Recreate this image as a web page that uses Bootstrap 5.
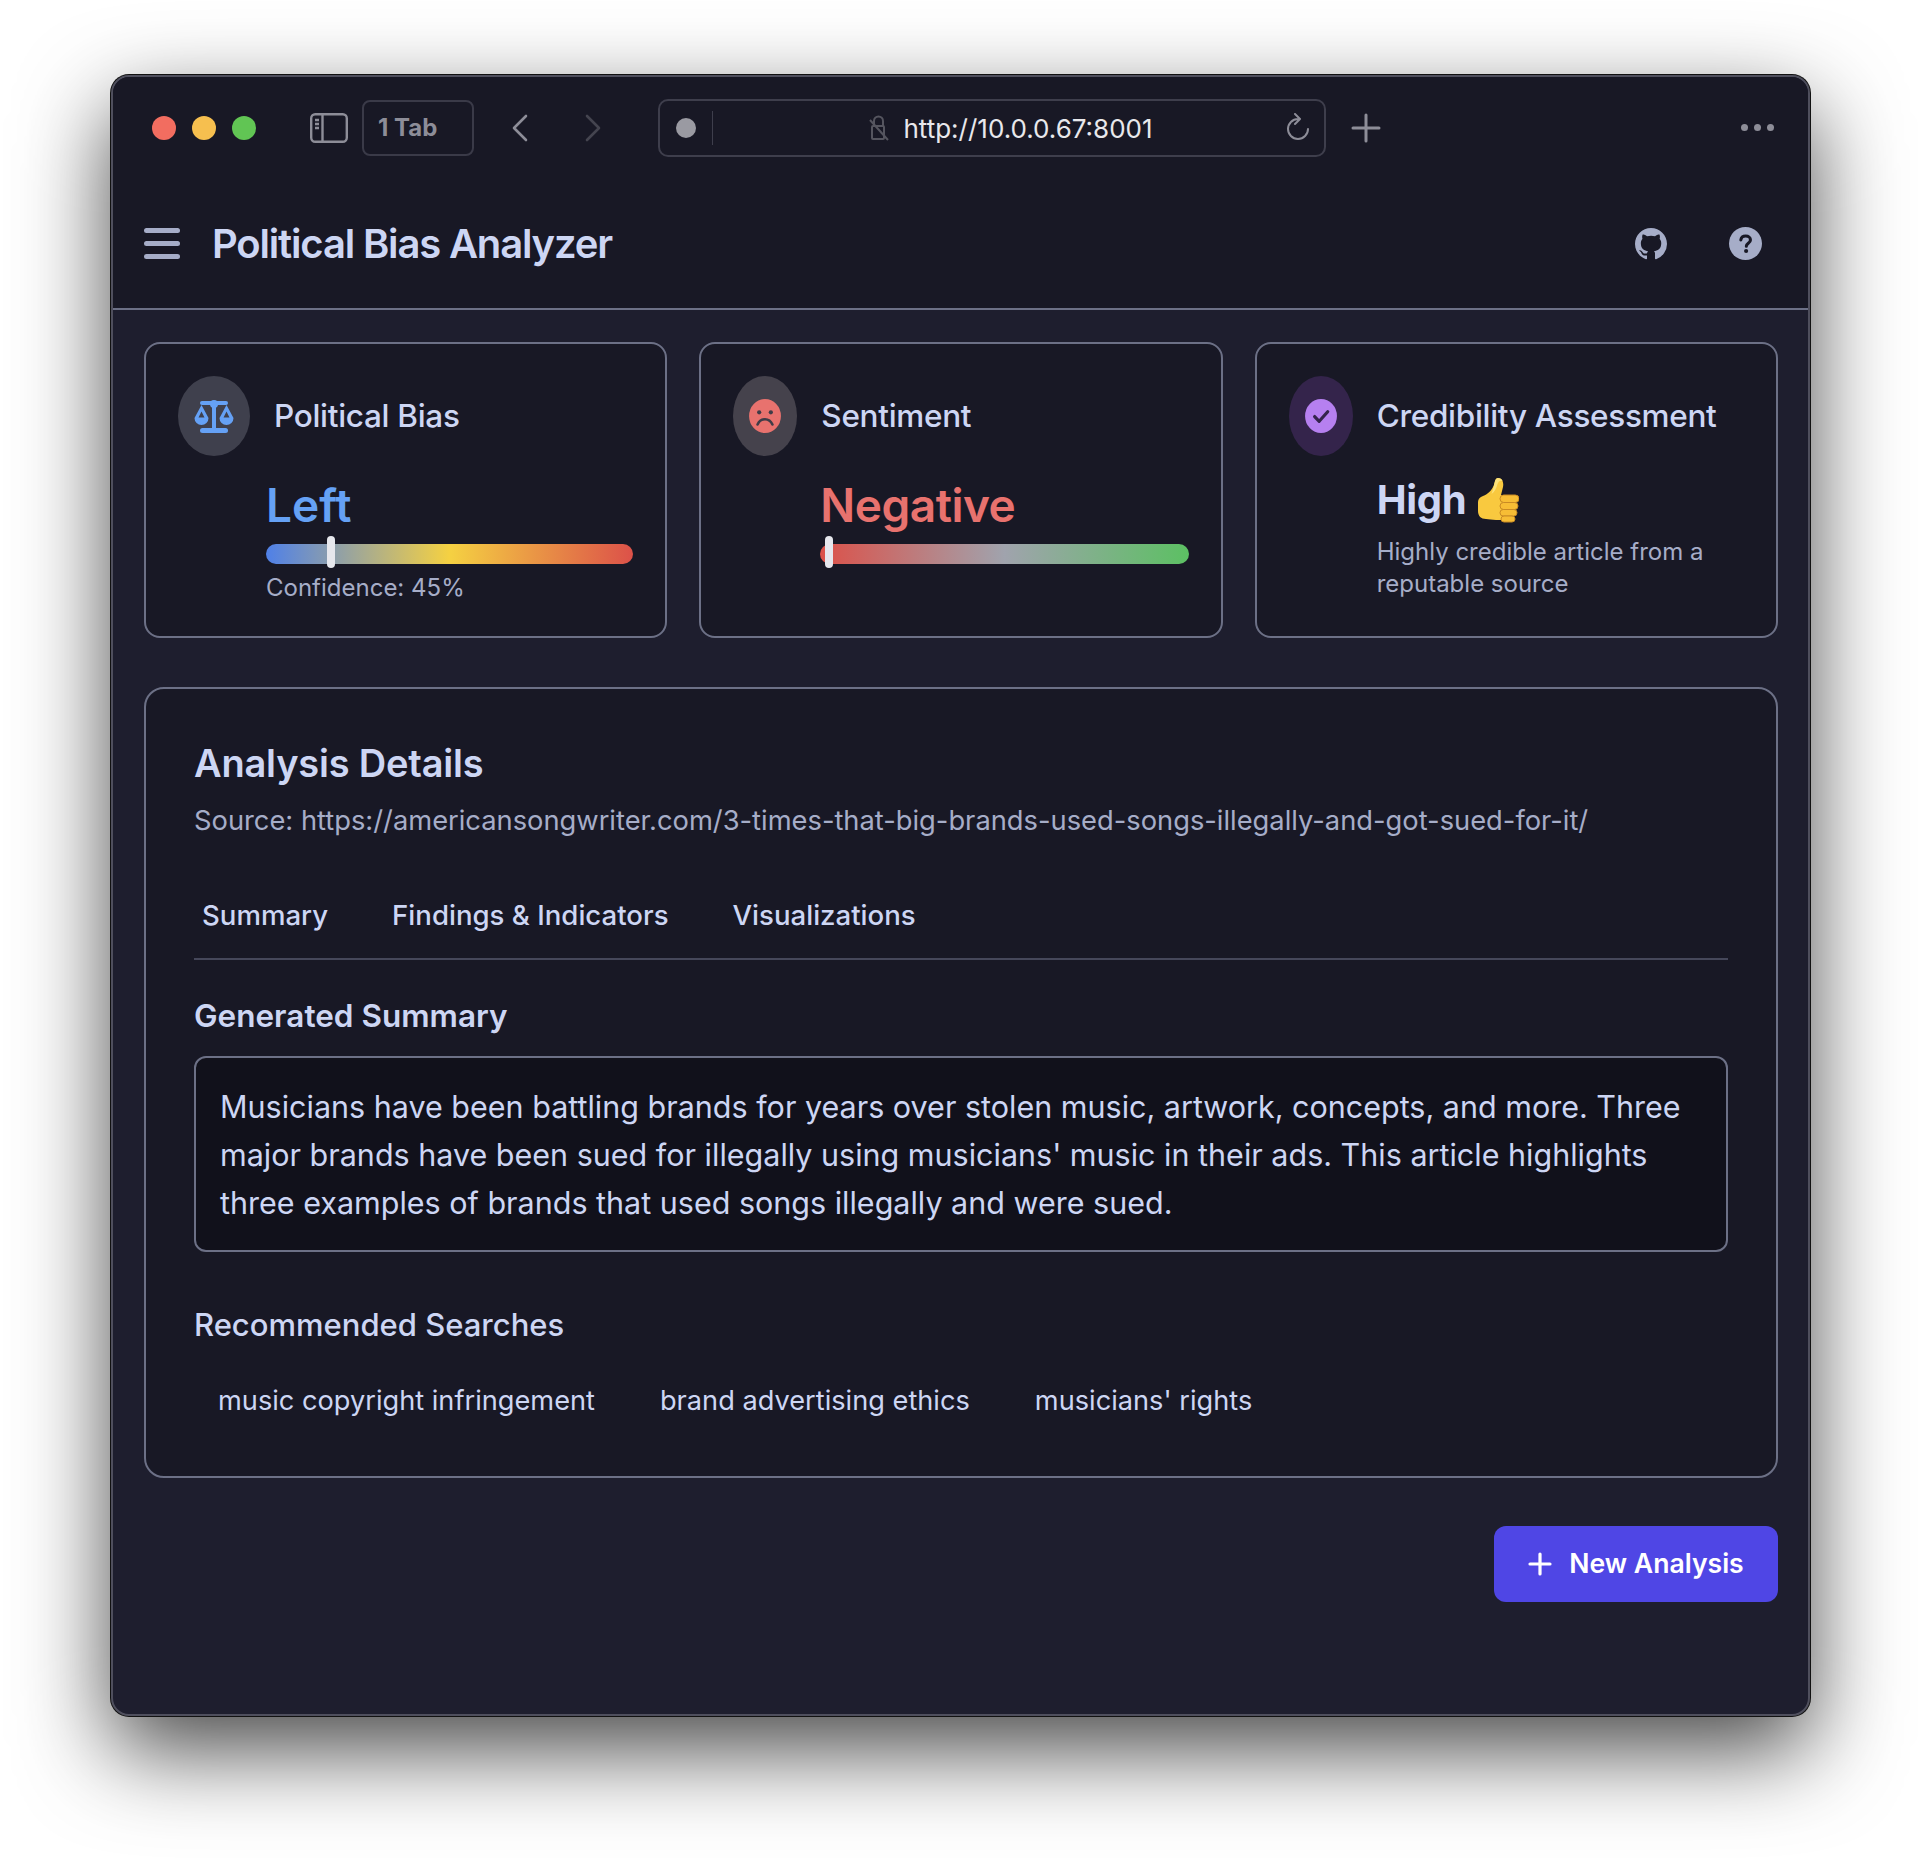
<!DOCTYPE html>
<html lang="en">
<head>
    <title>Political Bias Analyzer</title>
    <meta charset="utf-8">
    <meta name="viewport" content="width=device-width, initial-scale=1">
    <link href="https://cdn.jsdelivr.net/npm/bootstrap@5.3.3/dist/css/bootstrap.min.css" rel="stylesheet">
    <script src="https://cdn.jsdelivr.net/npm/bootstrap@5.3.3/dist/js/bootstrap.bundle.min.js"></script>
    <style>
        body { background: #fff; font-family: Inter, "Noto Sans", sans-serif; color: #cdd6f4; }
        .stage { padding: 75px 112px 148px 111px; }
        .win { height: 1641px; background: #1e1e2e; border: 2px solid #4f4f5d; border-radius: 18px; overflow: hidden;
            box-shadow: 0 0 0 1px #111, 0 34px 90px rgba(0,0,0,.72); }
        .chrome { height: 102px; background: #181825; padding: 0 34px 0 39px; }
        .lights { gap: 16px; }
        .light { width: 24px; height: 24px; border-radius: 50%; }
        .light-red { background: #f26d60; }
        .light-yellow { background: #f6bf4f; }
        .light-green { background: #61c554; }
        .side-ico { margin-left: 54px; }
        .tab-box { width: 112px; height: 56px; margin-left: 14px; border: 2px solid #3a3a48; border-radius: 8px; color: #8d8d98; font-size: 24px; font-weight: 700; padding-left: 14px; }
        .back-ico { margin-left: 38px; }
        .fwd-ico { margin-left: 57px; }
        .addr { width: 668px; height: 58px; border: 2px solid #3e3e4c; border-radius: 10px; margin-left: 57px; color: #e8e8ec; font-size: 26px; }
        .addr-dot { width: 20px; height: 20px; border-radius: 50%; background: #9a9aa2; margin-left: 16px; }
        .addr-sep { width: 1px; height: 34px; background: #3e3e4c; margin-left: 16px; }
        .addr-url { gap: 14px; padding-left: 24px; }
        .reload-ico { margin-right: 13px; }
        .plus-ico { margin-left: 25px; }
        .more-dots { gap: 6px; margin-bottom: 2px; }
        .more-dots div { width: 7px; height: 7px; border-radius: 50%; background: #8d8d98; }
        .appbar { height: 131px; background: #181825; border-bottom: 2px solid #6c7086; padding: 0 46px 0 31px; }
        .app-title { font-size: 40px; font-weight: 600; letter-spacing: -1.17px; margin: 0 0 0 32px; color: #cdd6f4; }
        .help-ico { margin-left: 62px; }
        .content { padding: 32px 30px 0 31px; }
        .tiles { display: grid; grid-template-columns: repeat(3, 1fr); gap: 32px; }
        .tile { height: 296px; background: #181825; border: 2px solid #6c7086; border-radius: 16px; padding: 32px; }
        .tile-top { gap: 24px; }
        .tile-icon { height: 80px; border-radius: 50%; flex: none; }
        .ti-blue { width: 72px; background: #3f404d; }
        .ti-red { width: 64px; background: #45424c; }
        .ti-purple { width: 64px; background: #34244b; }
        .tile-name { font-size: 31.5px; font-weight: 500; letter-spacing: -.3px; line-height: 1; color: #cdd6f4; }
        .tile-body { padding-left: 87px; margin-top: 26px; }
        .bias-body { padding-left: 88px; }
        .tile-val { font-size: 46px; font-weight: 600; letter-spacing: -.5px; line-height: 1; }
        .val-left { color: #65a1f5; letter-spacing: 0; }
        .val-neg { color: #e8726e; }
        .gauge { height: 20px; margin-top: 16px; border-radius: 10px; position: relative; }
        .gauge-bias { background: linear-gradient(90deg, #4f80e8, #f5d142 50%, #dc5149); }
        .gauge-sent { background: linear-gradient(90deg, #dc5149, #a0a3ad 50%, #5cc063); }
        .gauge-mark { position: absolute; top: -8px; width: 8px; height: 32px; background: #e6e7ed; border-radius: 4px; }
        .tile-note { font-size: 24px; color: #a6adc8; line-height: 32px; margin-top: 8px; }
        .cred-body { padding-left: 88px; margin-top: 14px; }
        .cred-row { gap: 11px; }
        .cred-val { font-size: 40px; font-weight: 700; letter-spacing: -.3px; color: #cdd6f4; }
        .cred-note { margin-top: 6px; }
        .panel { height: 791px; margin-top: 49px; background: #181825; border: 2px solid #6c7086; border-radius: 20px; padding: 55px 48px 48px; }
        .panel-title { font-size: 38px; font-weight: 600; letter-spacing: -.2px; line-height: 1; margin: 0; color: #cdd6f4; }
        .panel-src { font-size: 27.3px; color: #a6adc8; line-height: 36px; margin-top: 21px; }
        .tabs-row { border-bottom: 2px solid #45475a; height: 121px; padding-top: 59px; }
        .tab-item { font-size: 27.6px; font-weight: 500; padding: 0 8px; margin-right: 48px; line-height: 34px; }
        .sub-head { font-size: 31.5px; font-weight: 600; line-height: 1; color: #cdd6f4; margin-top: 40px; }
        .rec-head { font-size: 31px; font-weight: 500; margin-top: 57px; }
        .summary { margin-top: 24px; height: 196px; background: #11111b; border: 2px solid #6c7086; border-radius: 12px; padding: 25px 24px; font-size: 30.5px; line-height: 48px; color: #cdd6f4; }
        .chip-row { margin-top: 41px; gap: 17px; }
        .chip-item { font-size: 27.2px; line-height: 40px; padding: 0 24px; }
        .new-btn { width: 284px; height: 76px; background: #4f46e5; border-radius: 12px; border: 0; color: #fff; font-size: 26.6px; font-weight: 600; gap: 17px; margin-top: 48px; }
        .new-btn:hover { background: #4338ca; color: #fff; }
    </style>
</head>
<body>
<div class="stage">
    <div class="win">
        <div class="chrome d-flex align-items-center">
            <div class="lights d-flex">
                <div class="light light-red"></div>
                <div class="light light-yellow"></div>
                <div class="light light-green"></div>
            </div>
            <svg class="side-ico" width="38" height="30" viewBox="0 0 38 30" fill="none" stroke="#8d8d98" stroke-width="2.4"><rect x="1.2" y="1.2" width="35.6" height="27.6" rx="4"/><path d="M12.5 1v28M5 7h4M5 11h4M5 15h4"/></svg>
            <div class="tab-box d-flex align-items-center">1 Tab</div>
            <svg class="back-ico" width="16" height="28" viewBox="0 0 16 28" fill="none" stroke="#8d8d98" stroke-width="2.6" stroke-linecap="round" stroke-linejoin="round"><path d="M14 2 2 14l12 12"/></svg>
            <svg class="fwd-ico" width="16" height="28" viewBox="0 0 16 28" fill="none" stroke="#44444f" stroke-width="2.6" stroke-linecap="round" stroke-linejoin="round"><path d="m2 2 12 12L2 26"/></svg>
            <div class="addr d-flex align-items-center">
                <div class="addr-dot"></div>
                <div class="addr-sep"></div>
                <div class="addr-url flex-grow-1 d-flex justify-content-center align-items-center">
                    <svg width="20" height="28" viewBox="0 0 20 28" fill="none" stroke="#55555f" stroke-width="2"><rect x="3" y="12" width="12" height="13" rx="1"/><path d="M5 12V7a4.500 4.500 0 0 1 9 0v5M1 6l18 20"/></svg>
                    <span>http://10.0.0.67:8001</span>
                </div>
                <svg class="reload-ico" width="26" height="30" viewBox="0 0 26 30" fill="none" stroke="#8d8d98" stroke-width="2" stroke-linecap="round" stroke-linejoin="round"><path d="M13 6a10 10 0 1 0 10 10M10 1l5 5-5 5"/></svg>
            </div>
            <svg class="plus-ico" width="30" height="30" viewBox="0 0 30 30" stroke="#8d8d98" stroke-width="3" stroke-linecap="round"><path d="M15 2v26M2 15h26"/></svg>
            <div class="more-dots ms-auto d-flex"><div></div><div></div><div></div></div>
        </div>
        <div class="appbar d-flex align-items-center">
            <svg width="36" height="32" viewBox="0 0 36 32" fill="#a6adc8"><rect x="0" y="0" width="36" height="5" rx="2.500"/><rect x="0" y="13" width="36" height="5" rx="2.500"/><rect x="0" y="26" width="36" height="5" rx="2.500"/></svg>
            <h1 class="app-title">Political Bias Analyzer</h1>
            <svg class="ms-auto" width="32" height="32" viewBox="0 0 16 16" fill="#a6adc8"><path d="M8 0C3.580 0 0 3.580 0 8c0 3.540 2.290 6.530 5.470 7.590.4.070.55-.17.55-.38 0-.19-.01-.82-.01-1.490-2.010.37-2.530-.49-2.690-.94-.09-.23-.48-.94-.82-1.130-.28-.15-.68-.52-.01-.53.63-.01 1.080.58 1.230.82.720 1.210 1.870.87 2.330.66.070-.52.280-.87.510-1.070-1.780-.2-3.640-.89-3.640-3.950 0-.87.310-1.590.820-2.150-.08-.2-.36-1.020.08-2.120 0 0 .67-.21 2.200.82.64-.18 1.320-.27 2-.27s1.360.09 2 .27c1.530-1.040 2.200-.82 2.200-.82.44 1.100.16 1.920.08 2.120.51.560.82 1.270.82 2.150 0 3.070-1.870 3.750-3.650 3.950.29.250.54.730.54 1.480 0 1.070-.01 1.930-.01 2.200 0 .21.150.46.550.38A8.010 8.010 0 0 0 16 8c0-4.420-3.580-8-8-8"/></svg>
            <svg class="help-ico" width="33" height="33" viewBox="0 0 32 32"><circle cx="16" cy="16" r="16" fill="#a6adc8"/><path d="M11.500 12.500c.3-2.400 2.100-3.700 4.700-3.700 2.700 0 4.600 1.500 4.600 3.800 0 3.200-4 3.100-4 6" fill="none" stroke="#181825" stroke-width="3" stroke-linecap="round"/><circle cx="16.600" cy="23.300" r="2" fill="#181825"/></svg>
        </div>
        <div class="content">
            <div class="tiles">
                <div class="tile">
                    <div class="tile-top d-flex align-items-center">
                        <div class="tile-icon ti-blue d-flex align-items-center justify-content-center">
                            <svg width="40" height="34" viewBox="0 0 40 34" fill="#65a1f5"><rect x="6" y="2" width="28" height="4" rx="2"/><circle cx="20" cy="5" r="4"/><rect x="18" y="5" width="4" height="25"/><rect x="6" y="29" width="28" height="5" rx="2.500"/><path d="M7.500 6 0.500 19a7 7 0 0 0 14 0L7.500 6Zm0 6.500 3 6h-6l3-6ZM32.500 6 25.500 19a7 7 0 0 0 14 0L32.500 6Zm0 6.500 3 6h-6l3-6Z" fill-rule="evenodd"/></svg>
                        </div>
                        <div class="tile-name">Political Bias</div>
                    </div>
                    <div class="tile-body bias-body">
                        <div class="tile-val val-left">Left</div>
                        <div class="gauge gauge-bias">
                            <div class="gauge-mark" style="left:61px"></div>
                        </div>
                        <div class="tile-note">Confidence: 45%</div>
                    </div>
                </div>
                <div class="tile">
                    <div class="tile-top d-flex align-items-center">
                        <div class="tile-icon ti-red d-flex align-items-center justify-content-center">
                            <svg width="32" height="34" viewBox="0 0 30 32"><ellipse cx="15" cy="16" rx="15" ry="16" fill="#e8726e"/><circle cx="9.500" cy="12.500" r="2" fill="#3f3c47"/><circle cx="20.500" cy="12.500" r="2" fill="#3f3c47"/><path d="M8 24c1.500-3.500 4-5 7-5s5.500 1.500 7 5" fill="none" stroke="#3f3c47" stroke-width="2.400" stroke-linecap="round"/></svg>
                        </div>
                        <div class="tile-name">Sentiment</div>
                    </div>
                    <div class="tile-body">
                        <div class="tile-val val-neg">Negative</div>
                        <div class="gauge gauge-sent">
                            <div class="gauge-mark" style="left:5px"></div>
                        </div>
                    </div>
                </div>
                <div class="tile">
                    <div class="tile-top d-flex align-items-center">
                        <div class="tile-icon ti-purple d-flex align-items-center justify-content-center">
                            <svg width="32" height="34" viewBox="0 0 30 32"><ellipse cx="15" cy="16" rx="15" ry="16" fill="#b680f0"/><path d="M9 16.500l4.300 4.500 8-9" fill="none" stroke="#34244b" stroke-width="3" stroke-linecap="round" stroke-linejoin="round"/></svg>
                        </div>
                        <div class="tile-name">Credibility Assessment</div>
                    </div>
                    <div class="cred-body">
                        <div class="cred-row d-flex align-items-center">
                            <span class="cred-val">High</span>
                            <svg width="42" height="46" viewBox="0 0 42 46">
                                <path d="M1 25c0-3 2-5 5-6 5-2 9-6 11-11 1-3 1-7 4-7 4 0 6 4 5 9l-2 8h4v25h-9c-4 0-7-1-10-1-5 0-8-3-8-8V25Z" fill="#f9c93f"/>
                                <path d="M17 8c1-3 1-7 4-7 2 0 4 1 4.500 3-2-1-4 0-5 3-1 4-3 8-6 10 1-3 2-6 2.500-9Z" fill="#fde27a"/>
                                <g fill="#f7bd35" stroke="#c98a24" stroke-width="1"><rect x="23" y="18" width="19" height="7.500" rx="3.700"/><rect x="23" y="25.500" width="18" height="7" rx="3.500"/><rect x="23" y="32.500" width="17" height="6.500" rx="3.200"/><rect x="24" y="39" width="14" height="6" rx="3"/></g>
                            </svg>
                        </div>
                        <div class="tile-note cred-note">Highly credible article from a reputable source</div>
                    </div>
                </div>
            </div>
            <div class="panel">
                <h2 class="panel-title">Analysis Details</h2>
                <div class="panel-src">Source: https://americansongwriter.com/3-times-that-big-brands-used-songs-illegally-and-got-sued-for-it/</div>
                <div class="tabs-row d-flex">
                    <div class="tab-item">Summary</div>
                    <div class="tab-item">Findings &amp; Indicators</div>
                    <div class="tab-item">Visualizations</div>
                </div>
                <div class="sub-head">Generated Summary</div>
                <div class="summary">Musicians have been battling brands for years over stolen music, artwork, concepts, and more. Three major brands have been sued for illegally using musicians' music in their ads. This article highlights three examples of brands that used songs illegally and were sued.</div>
                <div class="sub-head rec-head">Recommended Searches</div>
                <div class="chip-row d-flex">
                    <div class="chip-item">music copyright infringement</div>
                    <div class="chip-item">brand advertising ethics</div>
                    <div class="chip-item">musicians' rights</div>
                </div>
            </div>
            <div class="d-flex justify-content-end">
                <button type="button" class="btn new-btn d-flex align-items-center justify-content-center">
                    <svg width="24" height="24" viewBox="0 0 24 24" stroke="#fff" stroke-width="3.200" stroke-linecap="round"><path d="M12 2v20M2 12h20"/></svg>
                    New Analysis
                </button>
            </div>
        </div>
    </div>
</div>
</body>
</html>
